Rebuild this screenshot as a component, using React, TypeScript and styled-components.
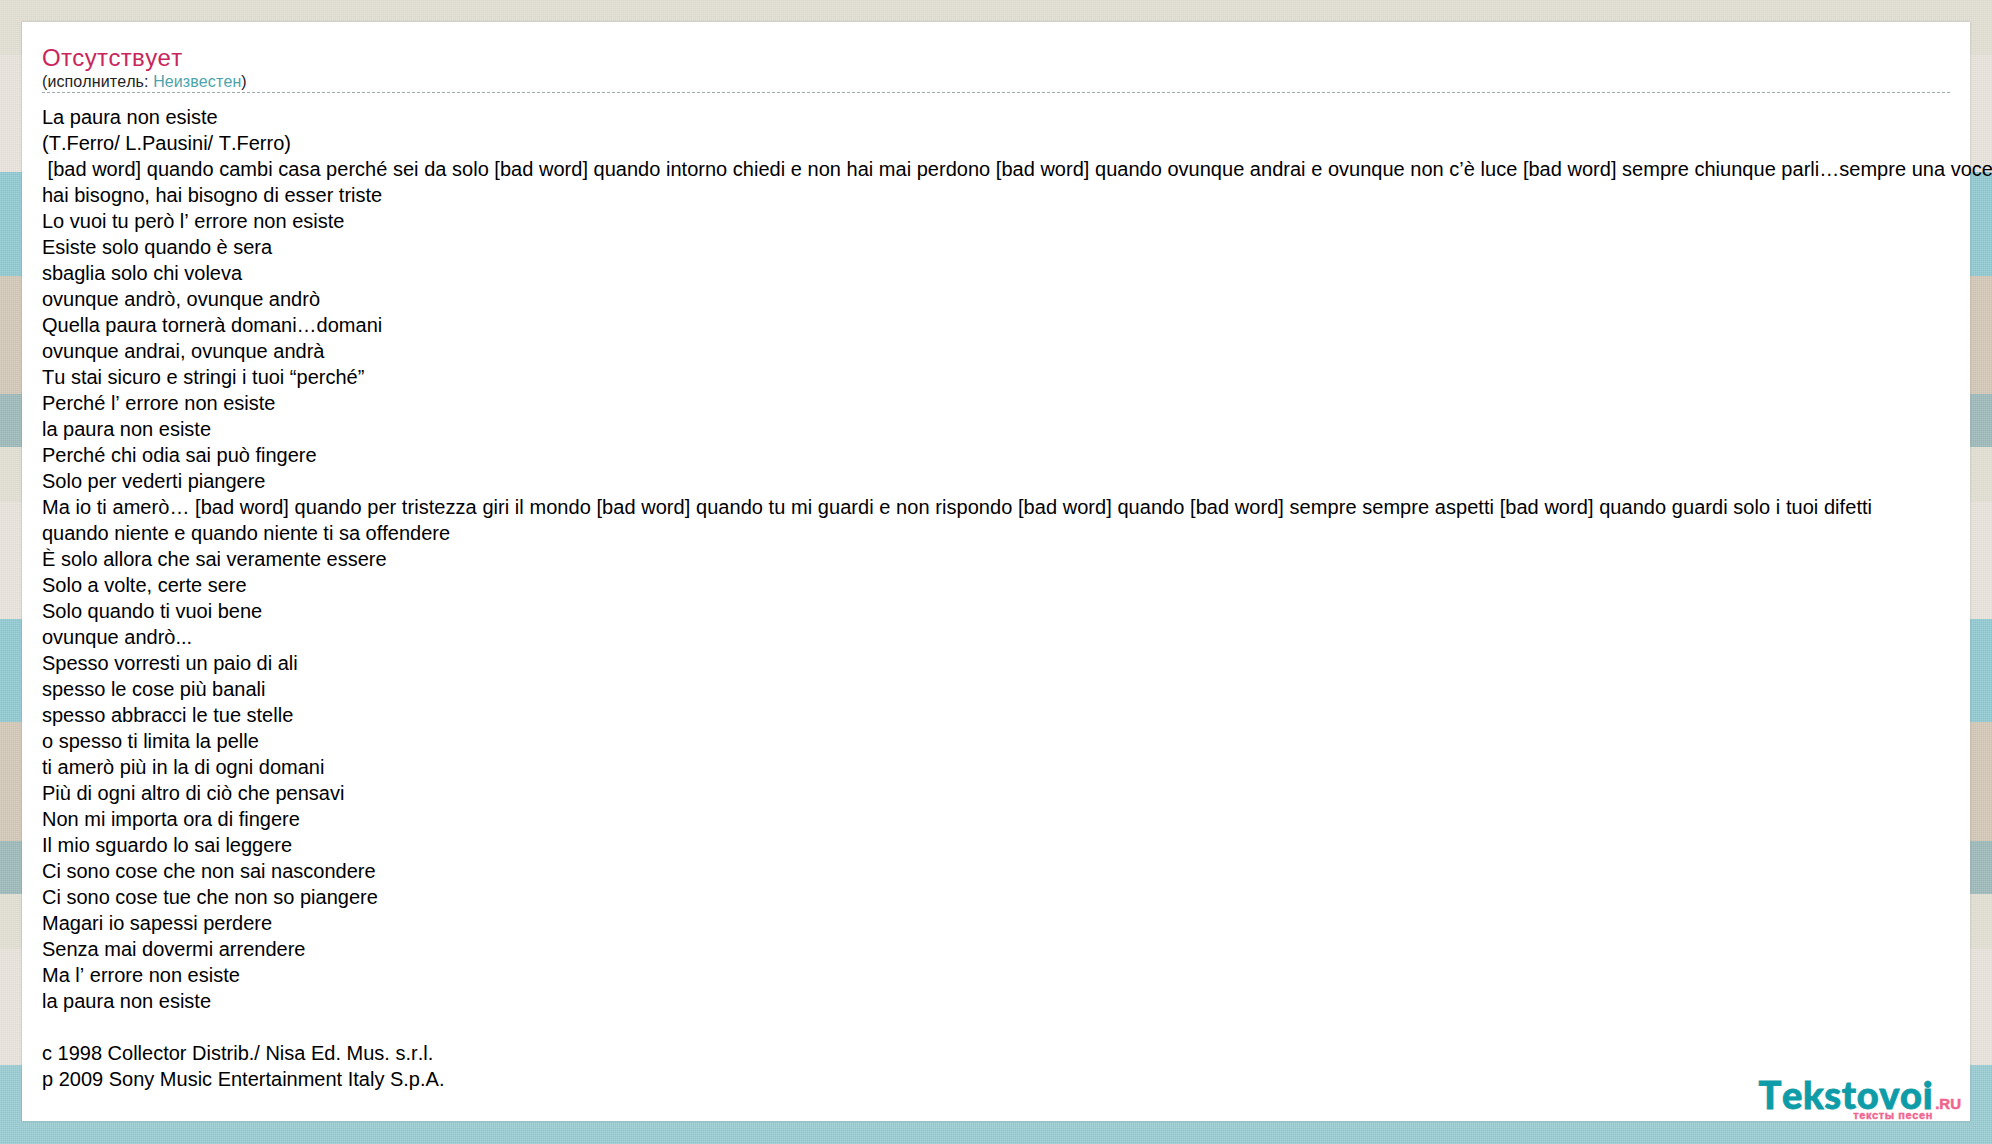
import React from "react";
import styled, { createGlobalStyle } from "styled-components";

// tracking: small per-line nudge so the two very long lines end where they do in the picture
const lyrics: { text: string; tracking?: number }[] = [
  { text: "La paura non esiste" },
  { text: "(T.Ferro/ L.Pausini/ T.Ferro)" },
  {
    text: " [bad word] quando cambi casa perché sei da solo [bad word] quando intorno chiedi e non hai mai perdono [bad word] quando ovunque andrai e ovunque non c’è luce [bad word] sempre chiunque parli…sempre una voce",
    tracking: 0.02,
  },
  { text: "hai bisogno, hai bisogno di esser triste" },
  { text: "Lo vuoi tu però l’ errore non esiste" },
  { text: "Esiste solo quando è sera" },
  { text: "sbaglia solo chi voleva" },
  { text: "ovunque andrò, ovunque andrò" },
  { text: "Quella paura tornerà domani…domani" },
  { text: "ovunque andrai, ovunque andrà" },
  { text: "Tu stai sicuro e stringi i tuoi “perché”" },
  { text: "Perché l’ errore non esiste" },
  { text: "la paura non esiste" },
  { text: "Perché chi odia sai può fingere" },
  { text: "Solo per vederti piangere" },
  {
    text: "Ma io ti amerò… [bad word] quando per tristezza giri il mondo [bad word] quando tu mi guardi e non rispondo [bad word] quando [bad word] sempre sempre aspetti [bad word] quando guardi solo i tuoi difetti",
    tracking: 0.05,
  },
  { text: "quando niente e quando niente ti sa offendere" },
  { text: "È solo allora che sai veramente essere" },
  { text: "Solo a volte, certe sere" },
  { text: "Solo quando ti vuoi bene" },
  { text: "ovunque andrò..." },
  { text: "Spesso vorresti un paio di ali" },
  { text: "spesso le cose più banali" },
  { text: "spesso abbracci le tue stelle" },
  { text: "o spesso ti limita la pelle" },
  { text: "ti amerò più in la di ogni domani" },
  { text: "Più di ogni altro di ciò che pensavi" },
  { text: "Non mi importa ora di fingere" },
  { text: "Il mio sguardo lo sai leggere" },
  { text: "Ci sono cose che non sai nascondere" },
  { text: "Ci sono cose tue che non so piangere" },
  { text: "Magari io sapessi perdere" },
  { text: "Senza mai dovermi arrendere" },
  { text: "Ma l’ errore non esiste" },
  { text: "la paura non esiste" },
  { text: "" },
  { text: "c 1998 Collector Distrib./ Nisa Ed. Mus. s.r.l." },
  { text: "p 2009 Sony Music Entertainment Italy S.p.A." },
];

const GlobalStyle = createGlobalStyle`
  html, body {
    margin: 0;
    height: 100%;
    overflow: hidden;
  }
  body {
    font-family: "Liberation Sans", Arial, sans-serif;
    font-kerning: none;
    color: #000;
  }
`;

const Page = styled.div`
  box-sizing: border-box;
  position: relative;
  height: 1144px;
  padding: 22px 22px 23px;
  overflow: hidden;
  background-color: #e2dfd3;
  background-image:
    repeating-linear-gradient(90deg, rgba(255, 255, 255, 0.07) 0 1px, rgba(0, 0, 0, 0.02) 1px 2px),
    repeating-linear-gradient(0deg, rgba(255, 255, 255, 0.07) 0 1px, rgba(0, 0, 0, 0.02) 1px 2px),
    linear-gradient(
      to bottom,
      #e2dfd3 0 55px,
      #eae3dc 55px 172px,
      #8fc9d2 172px 276px,
      #d4c8b7 276px 394px,
      #9dbabb 394px 447px,
      #e2dfd3 447px 502px,
      #eae3dc 502px 619px,
      #8fc9d2 619px 722px,
      #d4c8b7 722px 841px,
      #9dbabb 841px 894px,
      #e2dfd3 894px 949px,
      #eae3dc 949px 1065px,
      #98cdd3 1065px 1144px
    );
`;

const Card = styled.main`
  box-sizing: border-box;
  height: 1099px;
  padding: 21px 20px 0;
  background: #fff;
  box-shadow: 0 0 2px rgba(120, 120, 120, 0.45);
`;

const Heading = styled.header`
  box-sizing: border-box;
  height: 50px;
  border-bottom: 1px dashed #9fa9ab;
`;

const Title = styled.h1`
  margin: 0;
  font-size: 24px;
  font-weight: 400;
  line-height: 29px;
  letter-spacing: 0.35px;
  color: #c9265c;
`;

const Performer = styled.div`
  font-size: 16px;
  line-height: 20px;
  letter-spacing: 0.1px;
  color: #222;
`;

const PerformerLink = styled.a`
  color: #4ca3ab;
  text-decoration: none;
`;

const Lyrics = styled.div`
  margin-top: 11px;
  font-size: 20px;
  line-height: 26px;
  white-space: pre;
`;

const Line = styled.div<{ $tracking?: number }>`
  min-height: 26px;
  letter-spacing: ${(p) => p.$tracking ?? 0}px;
`;

const Logo = styled.div`
  position: absolute;
  right: 31px;
  bottom: 22px;
  display: flex;
  flex-direction: column;
  align-items: flex-end;
`;

const LogoRow = styled.div`
  display: flex;
  align-items: baseline;
  gap: 2px;
`;

const LogoName = styled.span`
  font-family: Lato, "Liberation Sans", sans-serif;
  font-size: 38px;
  font-weight: 900;
  line-height: 30px;
  letter-spacing: 0.6px;
  color: #0e9ca8;
  -webkit-text-stroke: 0.8px #0e9ca8;
`;

const LogoTld = styled.span`
  font-size: 15px;
  font-weight: 700;
  line-height: 15px;
  color: #f0658f;
  -webkit-text-stroke: 0.5px #f0658f;
`;

const LogoTagline = styled.span`
  margin: 0 28px 2px 0;
  font-size: 11px;
  font-weight: 700;
  line-height: 9px;
  letter-spacing: 0.6px;
  color: #f0658f;
  -webkit-text-stroke: 0.4px #f0658f;
`;

export default function App() {
  return (
    <>
      <GlobalStyle />
      <Page>
        <Card>
          <Heading>
            <Title>Отсутствует</Title>
            <Performer>
              (исполнитель: <PerformerLink href="#">Неизвестен</PerformerLink>)
            </Performer>
          </Heading>
          <Lyrics>
            {lyrics.map((line, i) => (
              <Line key={i} $tracking={line.tracking}>
                {line.text}
              </Line>
            ))}
          </Lyrics>
        </Card>
        <Logo>
          <LogoRow>
            <LogoName>Tekstovoi</LogoName>
            <LogoTld>.RU</LogoTld>
          </LogoRow>
          <LogoTagline>тексты песен</LogoTagline>
        </Logo>
      </Page>
    </>
  );
}
